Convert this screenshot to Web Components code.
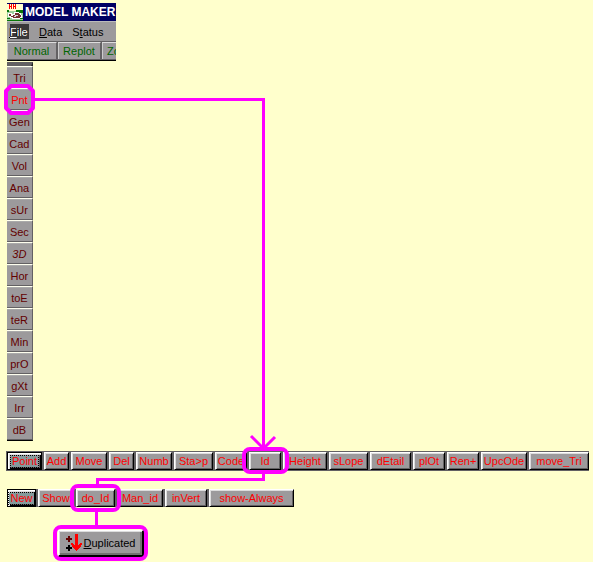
<!DOCTYPE html>
<html lang="en">
<head>
<meta charset="utf-8">
<title>Model Maker menu path</title>
<style>
body { margin: 0; background: #ffffcc; font: 11px/16px "Liberation Sans", Arial, sans-serif; color: #000; }
</style>
</head>
<body>
<menu-guide></menu-guide>
<script>
class ToolButton extends HTMLElement {
  connectedCallback() {
    this.attachShadow({ mode: "open" }).innerHTML = `
<style>
:host { display: block; flex: none; color: #f00; }
button { all: unset; box-sizing: border-box; display: flex; align-items: center; justify-content: center; width: 100%; height: 100%;
  background: #9c9a9c; white-space: nowrap; cursor: pointer;
  border: solid; border-width: 1px 1px 1px 1px; border-color: #fff #000 #000 #fff; box-shadow: inset 1px 1px #ddd, inset -1px -1px #636163; }
:host([kind=side]) { color: #630000; }
:host([kind=side]) button { border-width: 1px 1px 1px 0; border-color: #ffffef #636163 #636163 #fff; box-shadow: inset 0 1px #aaa; }
:host([kind=side]) .label { padding-top: 2px; }
:host([kind=top]) { color: #006500; }
:host([kind=top]) button { border-width: 1px 1px 1px 0; border-color: #ddd #636163 #636163 #ddd; box-shadow: inset 1px 0 #ccc; }
:host([tone=live]) { color: #f00; }
:host([tone=slant]) { font-style: italic; }
:host([focused]) button { border-color: #000; box-shadow: inset 1px 1px #fff, inset 2px 2px #ddd, inset -1px -1px #000, inset -2px -2px #636163; }
.label { padding: 0 2px; line-height: 12px; }
:host([focused]) .label { outline: 1px dotted #000; background: #849a9c; padding: 0 1px; line-height: 11px; }
:host([kind=result]) { color: #000; }
:host([kind=result]) button { border-width: 1px 2px 2px 1px; box-shadow: inset 1px 1px #ddd, inset -2px -2px #737173; }
:host([kind=result]) .label { display: flex; align-items: center; gap: 2px; }
</style><button type="button"><span class="label"><slot></slot></span></button>`;
  }
}
customElements.define("tool-button", ToolButton);

class ToolStrip extends HTMLElement {
  connectedCallback() {
    this.attachShadow({ mode: "open" }).innerHTML = `
<style>
:host { display: block; }
div { display: flex; gap: 2px; width: max-content; height: 18px; background: #636163; }
:host([framed]) div { border-top: 1px solid #636163; border-bottom: 1px solid #636163; margin-left: -1px; padding-left: 1px; }
</style><div role="toolbar"><slot></slot></div>`;
  }
}
customElements.define("tool-strip", ToolStrip);

class AppHeader extends HTMLElement {
  connectedCallback() {
    this.attachShadow({ mode: "open" }).innerHTML = `
<style>
:host { display: block; width: 109px; overflow: hidden; background: #9c9a9c; }
header { display: flex; align-items: center; height: 18px; gap: 2px; background: #000063; color: #fff; font-weight: bold; white-space: nowrap; }
h1 { font: inherit; font-size: 12px; margin: 0; }
svg { flex: none; display: block; }
nav { display: flex; height: 21px; box-sizing: border-box; padding: 2px 0 2px 3px; gap: 10px; border-top: 1px solid #bbb; border-bottom: 1px solid #636163; }
nav button { all: unset; line-height: 16px; cursor: pointer; }
nav button.active { background: #393839; color: #fff; width: 19px; height: 15px; line-height: 16px; text-shadow: -1px 0 #000; }
.bar { display: flex; gap: 1px; height: 18px; background: #636163; border-bottom: 1px solid #000; }
</style>
<header>
<svg width="16" height="17" viewBox="0 0 16 17" shape-rendering="crispEdges" aria-hidden="true">
<path fill="#ffffce" d="M0 0h16v7H0z"/><path fill="#9ccf9c" d="M0 7h16v10H0z"/>
<path stroke="#f00" fill="none" d="M2.500 0v5M4.500 0v5M2 2.500h3M6.500 0v5M8.500 0v5M6 2.500h3"/>
<path fill="#087508" d="M0 6h2v2H0zM9 6h7v2H9zM12 8h4v1h-4zM0 14h3v1H0zM12 14h4v1h-4zM0 16h16v1H0z"/>
<path fill="#fff" d="M1 9h4v1h2V8h5v1h2v2h1v3h-2v1H5v-1H3v-1H1z"/>
<path fill="#733031" d="M2 10h2v2h2v-1h2V9h4v1h1v1h1v2h-1v1H6v-1H4v-1H2z"/>
<path fill="#ddd" d="M8 11h3v1H8zM7 12h2v1H7z"/>
</svg><h1>MODEL MAKER</h1>
</header>
<nav><button class="active" type="button"><u>F</u>ile</button><button type="button"><u>D</u>ata</button><button type="button">S<u>t</u>atus</button></nav>
<div class="bar"><slot></slot></div>`;
  }
}
customElements.define("app-header", AppHeader);

class SideMenu extends HTMLElement {
  connectedCallback() {
    this.attachShadow({ mode: "open" }).innerHTML = `
<style>
:host { display: block; width: 26px; box-sizing: border-box; border-top: 4px solid #636163; border-right: 2px solid #212421; border-bottom: 1px solid #000; }
nav { display: grid; grid-auto-rows: 22px; }
</style><nav aria-label="Modules"><slot></slot></nav>`;
  }
}
customElements.define("side-menu", SideMenu);

/* Highlight rings and connecting path that lie over the controls */
class PathOverlay extends HTMLElement {
  connectedCallback() {
    this.attachShadow({ mode: "open" }).innerHTML = `
<style>
:host { position: absolute; top: 0; left: 0; pointer-events: none; }
svg { display: block; fill: none; stroke: #f0f; }
</style>
<svg width="593" height="562" viewBox="0 0 593 562" aria-hidden="true">
<g stroke-width="4">
<path d="M11 86h17l5 5v17l-5 5H11l-5-5V91z" stroke-linejoin="round"/>
<rect x="244" y="449" width="43" height="23" rx="6"/>
<rect x="72" y="486" width="47" height="24" rx="6"/>
<rect x="55" y="527" width="91" height="32" rx="6"/>
</g>
<g stroke-width="3">
<path d="M34 99.500H263.500V449M263.500 473V479.500H97.500V485M96.500 511V526"/>
<path d="M251 436L263.500 448.500L275 437"/>
</g>
</svg>`;
  }
}
customElements.define("path-overlay", PathOverlay);

class MenuGuide extends HTMLElement {
  connectedCallback() {
    const side = ["Tri","Pnt","Gen","Cad","Vol","Ana","sUr","Sec","3D","Hor","toE","teR","Min","prO","gXt","Irr","dB"];
    const points = [["Point",35],["Add",25],["Move",36],["Del",25],["Numb",36],["Sta&gt;p",39],["Code",32],["Id",32],["Height",44],["sLope",39],["dEtail",41],["plOt",32],["Ren+",32],["UpcOde",46],["move_Tri",60]];
    const ids = [["New",29],["Show",36],["do_Id",39],["Man_id",46],["inVert",42],["show-Always",85]];
    const strip = items => items.map(([t, w], i) => `<tool-button ${i ? "" : "focused"} style="width:${w}px">${t}</tool-button>`).join("");
    this.attachShadow({ mode: "open" }).innerHTML = `
<style>
:host { display: block; position: relative; padding: 3px 0 4px 7px; }
side-menu { margin-top: 1px; }
.points { margin-top: 10px; }
.ids { margin-top: 18px; }
.result { width: 86px; height: 27px; margin: 23px 0 0 51px; }
svg { display: block; flex: none; }
</style>
<main>
<app-header>
<tool-button kind="top" style="width:50px">Normal</tool-button><tool-button kind="top" style="width:43px">Replot</tool-button><tool-button kind="top" style="width:24px">Zo</tool-button>
</app-header>
<side-menu>${side.map(t => `<tool-button kind="side" ${t === "Pnt" ? 'tone="live"' : t === "3D" ? 'tone="slant"' : ""}>${t}</tool-button>`).join("")}</side-menu>
<tool-strip class="points" framed>${strip(points)}</tool-strip>
<tool-strip class="ids">${strip(ids)}</tool-strip>
<tool-button class="result" kind="result"><svg width="16" height="18" viewBox="0 0 16 18" shape-rendering="crispEdges" aria-hidden="true">
<path stroke="#630000" stroke-width="2" d="M0 5h6M3 2v6"/><path stroke="#000" stroke-width="2" d="M0 14h6M3 11v6"/>
<path fill="#f00" d="M9 0h3v11h1v-1h1V9h2v2h-1v2h-1v1h-1v1h-1v1h-1v1h-1v-1H9v-1H8v-1H7v-1H6v-2H5V9h2v1h1v1h1z"/></svg><span><u>D</u>uplicated</span></tool-button>
</main>
<path-overlay></path-overlay>`;
  }
}
customElements.define("menu-guide", MenuGuide);
</script>
</body>
</html>
